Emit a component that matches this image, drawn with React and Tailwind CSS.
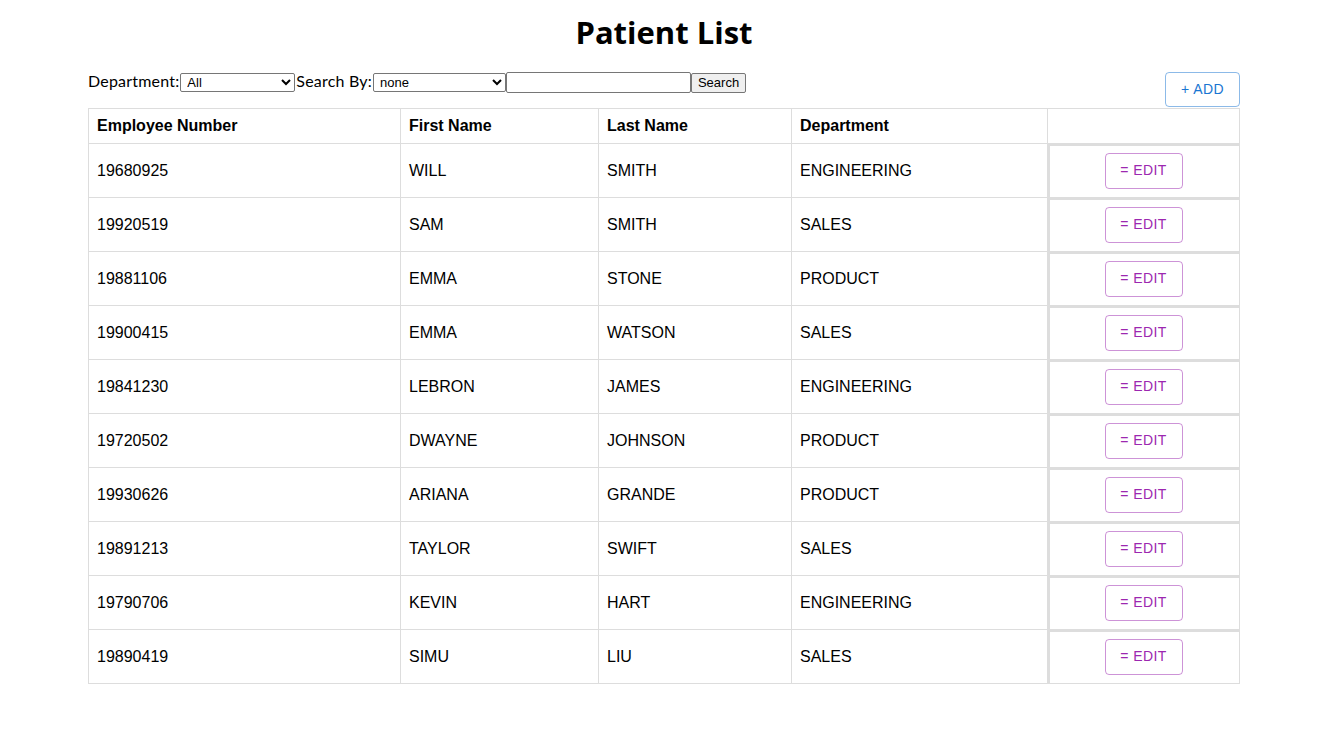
import React from "react";

const rows = [
  ["19680925", "WILL", "SMITH", "ENGINEERING"],
  ["19920519", "SAM", "SMITH", "SALES"],
  ["19881106", "EMMA", "STONE", "PRODUCT"],
  ["19900415", "EMMA", "WATSON", "SALES"],
  ["19841230", "LEBRON", "JAMES", "ENGINEERING"],
  ["19720502", "DWAYNE", "JOHNSON", "PRODUCT"],
  ["19930626", "ARIANA", "GRANDE", "PRODUCT"],
  ["19891213", "TAYLOR", "SWIFT", "SALES"],
  ["19790706", "KEVIN", "HART", "ENGINEERING"],
  ["19890419", "SIMU", "LIU", "SALES"],
];

export default function App() {
  return (
    <div className="min-h-[755px] bg-white text-black">
      <div className="ml-[88px] w-[1152px]">
        <h1
          className="pt-[12px] h-[72px] text-center text-[31px] font-bold leading-[40px]"
          style={{ fontFamily: '"Open Sans", sans-serif' }}
        >
          Patient List
        </h1>
        <div className="flex items-start justify-between h-[36px]">
          <div
            className="flex items-center h-[21px] text-[16px]"
            style={{ fontFamily: '"Lato", sans-serif' }}
          >
            <span className="tracking-[0.2px] -mt-[3px]">Department:</span>
            <select
              className="ml-[1px] w-[115px] h-[19px] border border-[#767676] rounded-[2px] text-[13px] pl-[2px]"
              style={{ fontFamily: '"Liberation Sans", Arial, sans-serif' }}
              defaultValue="All"
            >
              <option>All</option>
            </select>
            <span className="ml-[1px] tracking-[0.2px] -mt-[3px]">Search By:</span>
            <select
              className="ml-[1px] w-[133px] h-[19px] border border-[#767676] rounded-[2px] text-[13px] pl-[2px]"
              style={{ fontFamily: '"Liberation Sans", Arial, sans-serif' }}
              defaultValue="none"
            >
              <option>none</option>
            </select>
            <input
              className="w-[185px] h-[21px] border border-[#767676] rounded-[2px] px-[2px] text-[13px]"
              type="text"
            />
            <button
              className="h-[20px] px-[6px] border border-[#767676] bg-[#efefef] rounded-[2px] text-[13px] leading-[18px]"
              style={{ fontFamily: '"Liberation Sans", Arial, sans-serif' }}
            >
              Search
            </button>
          </div>
          <button
            className="w-[75px] h-[35px] border border-[#1976d2]/50 rounded-[4px] text-[#1976d2] text-[14px] tracking-[0.4px] uppercase"
            style={{ fontFamily: '"Liberation Sans", Arial, sans-serif' }}
          >
            + ADD
          </button>
        </div>
        <table
          className="w-[1152px] border-collapse text-[16px]"
          style={{ fontFamily: '"Liberation Sans", Arial, sans-serif' }}
        >
          <thead>
            <tr className="h-[35px]">
              <th className="w-[312px] border border-[#dddddd] text-left font-bold px-[8px]">Employee Number</th>
              <th className="w-[198px] border border-[#dddddd] text-left font-bold px-[8px]">First Name</th>
              <th className="w-[193px] border border-[#dddddd] text-left font-bold px-[8px]">Last Name</th>
              <th className="w-[256px] border border-[#dddddd] text-left font-bold px-[8px]">Department</th>
              <th className="border border-[#dddddd]"></th>
            </tr>
          </thead>
          <tbody>
            {rows.map((r) => (
              <tr key={r[0]} className="h-[54px]">
                <td className="border border-[#dddddd] px-[8px]">{r[0]}</td>
                <td className="border border-[#dddddd] px-[8px]">{r[1]}</td>
                <td className="border border-[#dddddd] px-[8px]">{r[2]}</td>
                <td className="border border-[#dddddd] px-[8px]">{r[3]}</td>
                <td className="border border-[#dddddd] p-0">
                  <div className="h-[53px] pr-[2px] pb-[2px] border-l-2 border-t-2 border-[#dddddd] flex items-center justify-center">
                    <button
                      className="w-[78px] h-[36px] border border-[#9c27b0]/50 rounded-[4px] text-[#9c27b0] text-[14px] tracking-[0.4px]"
                      style={{ fontFamily: '"Liberation Sans", Arial, sans-serif' }}
                    >
                      = EDIT
                    </button>
                  </div>
                </td>
              </tr>
            ))}
          </tbody>
        </table>
      </div>
    </div>
  );
}
